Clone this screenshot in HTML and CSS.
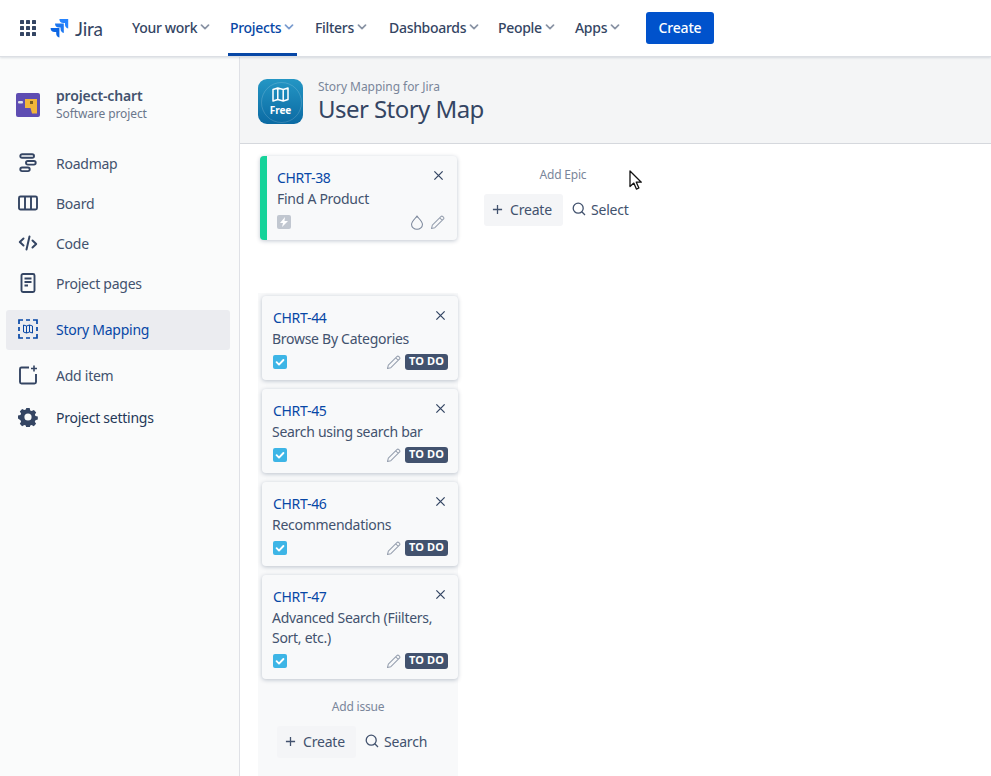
FILE: index.html
```html
<!DOCTYPE html>
<html lang="en">
<head>
    <meta charset="UTF-8">
    <meta name="viewport" content="width=device-width, initial-scale=1.0">
    <title>User Story Map</title>
    <link rel="stylesheet" href="styles.css">
</head>
<body>
    <svg class="sprites" width="0" height="0">
        <symbol id="chev" viewBox="0 0 10 6"><path d="M1.5 1.2 5 4.6l3.5-3.4" fill="none" stroke="currentColor" stroke-width="1.7" stroke-linecap="round" stroke-linejoin="round"/></symbol>
        <symbol id="close" viewBox="0 0 12 12"><path d="M1.5 1.5l9 9M10.5 1.5l-9 9" fill="none" stroke="currentColor" stroke-width="1.4"/></symbol>
        <symbol id="pencil" viewBox="0 0 16 16"><path d="M1.6 14.4l.9-3.6L11.6 1.7a1.5 1.5 0 0 1 2.1 0l.6.6a1.5 1.5 0 0 1 0 2.1L5.2 13.500z M10.400 3l2.600 2.600" fill="none" stroke="currentColor" stroke-width="1.100" stroke-linejoin="round"/></symbol>
        <symbol id="plus" viewBox="0 0 12 12"><path d="M6 1v10M1 6h10" fill="none" stroke="currentColor" stroke-width="1.4"/></symbol>
        <symbol id="search" viewBox="0 0 14 14"><circle cx="6.2" cy="6.2" r="5" fill="none" stroke="currentColor" stroke-width="1.3"/><path d="M9.8 9.8l3.2 3.2" fill="none" stroke="currentColor" stroke-width="1.3"/></symbol>
        <symbol id="check" viewBox="0 0 14 14"><rect width="14" height="14" rx="2" fill="#3db5e6"/><path d="M3.6 7.2l2.4 2.4 4.4-4.6" fill="none" stroke="#fff" stroke-width="1.9" stroke-linecap="round" stroke-linejoin="round"/></symbol>
    </svg>

    <header class="topbar">
        <svg class="apps-icon" width="16" height="16" viewBox="0 0 16 16" fill="#344563">
            <rect x="0" y="0" width="4" height="4" rx=".6"/><rect x="6" y="0" width="4" height="4" rx=".6"/><rect x="12" y="0" width="4" height="4" rx=".6"/>
            <rect x="0" y="6" width="4" height="4" rx=".6"/><rect x="6" y="6" width="4" height="4" rx=".6"/><rect x="12" y="6" width="4" height="4" rx=".6"/>
            <rect x="0" y="12" width="4" height="4" rx=".6"/><rect x="6" y="12" width="4" height="4" rx=".6"/><rect x="12" y="12" width="4" height="4" rx=".6"/>
        </svg>
        <div class="brand">
            <svg width="19" height="19" viewBox="0 0 19 19">
                <path d="M18.2 0H9.4a4 4 0 0 0 4 4h1.6v1.600a4 4 0 0 0 3.200 3.900z" fill="#2684ff"/>
                <path d="M13.800 4.500H5a4 4 0 0 0 4 4h1.600v1.600a4 4 0 0 0 3.200 3.900z" fill="#1f78f0"/>
                <path d="M9.400 9H.6a4 4 0 0 0 4 4h1.600v1.600a4 4 0 0 0 3.200 3.900z" fill="#0c66e4"/>
            </svg>
            <span class="brand-name">Jira</span>
        </div>
        <nav class="menu">
            <a class="menu-item w-work">Your work <svg class="chev"><use href="#chev"/></svg></a>
            <a class="menu-item w-projects active">Projects <svg class="chev"><use href="#chev"/></svg></a>
            <a class="menu-item w-filters">Filters <svg class="chev"><use href="#chev"/></svg></a>
            <a class="menu-item w-dash">Dashboards <svg class="chev"><use href="#chev"/></svg></a>
            <a class="menu-item w-people">People <svg class="chev"><use href="#chev"/></svg></a>
            <a class="menu-item w-apps">Apps <svg class="chev"><use href="#chev"/></svg></a>
        </nav>
        <button class="create-btn">Create</button>
    </header>

    <div class="layout">
        <aside class="sidebar">
            <div class="project">
                <svg class="project-icon" width="24" height="24" viewBox="0 0 24 24">
                    <rect width="24" height="24" rx="2" fill="#5e4db2"/>
                    <rect x="2" y="8" width="5" height="2.500" rx="1" fill="#dfe1e6"/>
                    <path d="M9 6h12v14.500h-5l-1.500-5.500H9z" fill="#f2b53a"/>
                    <rect x="14" y="8" width="3" height="3" fill="#7a5c1e"/>
                </svg>
                <div>
                    <div class="project-name">project-chart</div>
                    <div class="project-type">Software project</div>
                </div>
            </div>
            <ul class="side-nav">
                <li class="side-item">
                    <svg class="side-icon" viewBox="0 0 20 20" fill="none" stroke="#344563" stroke-width="1.900"><rect x="2.300" y="1.200" width="13.700" height="3.600" rx="1.800"/><rect x="8" y="8" width="9.700" height="3.600" rx="1.800"/><rect x="2.300" y="14.500" width="9.400" height="3.600" rx="1.800"/></svg>
                    Roadmap
                </li>
                <li class="side-item">
                    <svg class="side-icon" viewBox="0 0 20 20" fill="none" stroke="#344563" stroke-width="1.900"><rect x="1" y="3.500" width="18" height="13" rx="1.500"/><path d="M7 3.500v13M13 3.500v13"/></svg>
                    Board
                </li>
                <li class="side-item">
                    <svg class="side-icon" viewBox="0 0 20 20" fill="none" stroke="#344563" stroke-width="2" stroke-linecap="round" stroke-linejoin="round"><path d="M5.500 5.500 1.800 9l3.700 3.500M14.500 7.500l3.700 3.500-3.700 3.500M11.500 3.500 8.500 16.500"/></svg>
                    Code
                </li>
                <li class="side-item">
                    <svg class="side-icon" viewBox="0 0 20 20" fill="none" stroke="#344563" stroke-width="1.900"><rect x="3.500" y="1" width="13" height="18" rx="1.500"/><path d="M6.500 5.500h7M6.500 9h7M6.500 12.500h3.500"/></svg>
                    Project pages
                </li>
                <li class="side-item selected">
                    <svg class="side-icon" viewBox="0 0 20 20" fill="none" stroke="#0747a6" stroke-width="1.700"><path d="M1 5V1h4M8 1h4M15 1h4v4M19 8v4M19 15v4h-4M12 19H8M5 19H1v-4M1 12V8"/><path d="M5.500 6l3 1 3-1 3 1v7l-3-1-3 1-3-1zM8.500 7v7M11.500 6v7" stroke-width="1"/></svg>
                    Story Mapping
                </li>
                <li class="side-item r-add">
                    <svg class="side-icon" viewBox="0 0 20 20" fill="none" stroke="#344563" stroke-width="1.900"><path d="M11 2.500H3.500a1.500 1.500 0 0 0-1.500 1.500v13a1.500 1.500 0 0 0 1.500 1.500h13a1.500 1.500 0 0 0 1.500-1.500V9"/><path d="M16 .5v6M13 3.500h6" stroke-width="1.600"/></svg>
                    Add item
                </li>
                <li class="side-item dark r-settings">
                    <svg class="side-icon" viewBox="0 0 20 20"><path fill-rule="evenodd" fill="#344563" d="M8.300 1h3.400l.5 2.400 1.500.7 2.200-1.200 2.300 2.500-1.300 2.100.5 1.500 2.400.6v3l-2.400.6-.6 1.500 1.300 2.100-2.300 2.400-2.200-1.200-1.400.6-.5 2.400H8.300l-.5-2.400-1.500-.6-2.200 1.200-2.300-2.400 1.300-2.100-.6-1.500L0 11.600v-3l2.500-.6.600-1.500-1.300-2.100 2.300-2.500 2.200 1.200 1.500-.7zM10 6.400a3.600 3.600 0 1 0 0 7.200 3.600 3.600 0 0 0 0-7.200z"/></svg>
                    Project settings
                </li>
            </ul>
        </aside>

        <main class="content">
            <div class="page-head">
                <div class="app-logo">
                    <svg width="17" height="15" viewBox="0 0 17 15" fill="none" stroke="#fff" stroke-width="1.500" stroke-linejoin="round"><path d="M1 2.500 5.800 1l5.400 1.500L16 1v11.500L11.200 14l-5.400-1.500L1 14zM5.800 1v11.500M11.200 2.500V14"/></svg>
                    <span class="app-free">Free</span>
                </div>
                <div class="app-text">
                    <div class="app-name">Story Mapping for Jira</div>
                    <h1 class="page-title">User Story Map</h1>
                </div>
            </div>

            <div class="board">
                <div class="column">
                    <div class="epic-card">
                        <div class="card-top">
                            <a class="issue-key">CHRT-38</a>
                            <svg class="close-icon"><use href="#close"/></svg>
                        </div>
                        <div class="card-title">Find A Product</div>
                        <div class="card-foot">
                            <span class="epic-badge">
                                <svg width="8" height="10" viewBox="0 0 8 10"><path d="M5 0 0 6h3l-1 4 6-6H4.500z" fill="#fff"/></svg>
                            </span>
                            <span class="spacer"></span>
                            <svg class="drop-icon" viewBox="0 0 14 16"><path d="M7 1.200C5 4 1.200 6.800 1.200 10a5.800 5.200 0 0 0 11.600 0C12.800 6.800 9 4 7 1.200z" fill="none" stroke="currentColor" stroke-width="1.100"/></svg>
                            <svg class="pencil-icon"><use href="#pencil"/></svg>
                        </div>
                    </div>

                    <div class="issue-list">
                        <div class="issue-card">
                            <div class="card-top">
                                <a class="issue-key">CHRT-44</a>
                                <svg class="close-icon"><use href="#close"/></svg>
                            </div>
                            <div class="card-title">Browse By Categories</div>
                            <div class="card-foot">
                                <svg class="check-icon"><use href="#check"/></svg>
                                <span class="spacer"></span>
                                <svg class="pencil-icon"><use href="#pencil"/></svg>
                                <span class="status">TO DO</span>
                            </div>
                        </div>
                        <div class="issue-card">
                            <div class="card-top">
                                <a class="issue-key">CHRT-45</a>
                                <svg class="close-icon"><use href="#close"/></svg>
                            </div>
                            <div class="card-title">Search using search bar</div>
                            <div class="card-foot">
                                <svg class="check-icon"><use href="#check"/></svg>
                                <span class="spacer"></span>
                                <svg class="pencil-icon"><use href="#pencil"/></svg>
                                <span class="status">TO DO</span>
                            </div>
                        </div>
                        <div class="issue-card">
                            <div class="card-top">
                                <a class="issue-key">CHRT-46</a>
                                <svg class="close-icon"><use href="#close"/></svg>
                            </div>
                            <div class="card-title">Recommendations</div>
                            <div class="card-foot">
                                <svg class="check-icon"><use href="#check"/></svg>
                                <span class="spacer"></span>
                                <svg class="pencil-icon"><use href="#pencil"/></svg>
                                <span class="status">TO DO</span>
                            </div>
                        </div>
                        <div class="issue-card">
                            <div class="card-top">
                                <a class="issue-key">CHRT-47</a>
                                <svg class="close-icon"><use href="#close"/></svg>
                            </div>
                            <div class="card-title">Advanced Search (Fiilters, Sort, etc.)</div>
                            <div class="card-foot">
                                <svg class="check-icon"><use href="#check"/></svg>
                                <span class="spacer"></span>
                                <svg class="pencil-icon"><use href="#pencil"/></svg>
                                <span class="status">TO DO</span>
                            </div>
                        </div>
                        <div class="add-box add-issue">
                            <div class="add-label">Add issue</div>
                            <div class="add-actions">
                                <button class="add-create"><svg class="plus-icon"><use href="#plus"/></svg>Create</button>
                                <button class="add-other"><svg class="search-icon"><use href="#search"/></svg>Search</button>
                            </div>
                        </div>
                    </div>
                </div>

                <div class="add-box add-epic">
                    <div class="add-label">Add Epic</div>
                    <div class="add-actions">
                        <button class="add-create"><svg class="plus-icon"><use href="#plus"/></svg>Create</button>
                        <button class="add-other"><svg class="search-icon"><use href="#search"/></svg>Select</button>
                    </div>
                </div>
            </div>
        </main>
    </div>

    <svg class="cursor" width="14" height="21" viewBox="0 0 14 21"><path d="M1 1v15.500l3.800-3.400 2.600 6 2.500-1.100-2.600-5.800h5z" fill="#fff" stroke="#111" stroke-width="1.300" stroke-linejoin="round"/></svg>
</body>
</html>
```

FILE: styles.css
```css
* {
    box-sizing: border-box;
}
html, body {
    height: 100%;
}
body {
    margin: 0;
    height: 776px;
    overflow: hidden;
    font-family: "Noto Sans", "Open Sans", sans-serif;
    font-size: 14px;
    color: #42526e;
    background-color: #fff;
}
.sprites {
    position: absolute;
}
button {
    font-family: inherit;
    border: 0;
    background: none;
    cursor: pointer;
}

/* top bar */
.topbar {
    display: flex;
    align-items: center;
    height: 57px;
    padding-left: 20px;
    background-color: #fff;
    border-bottom: 1px solid #dcdfe4;
    box-shadow: 0 1px 2px rgba(9, 30, 66, 0.12);
    position: relative;
}
.brand {
    display: flex;
    align-items: center;
    gap: 6px;
    width: 82px;
    margin-left: 14px;
}
.brand-name {
    font-size: 19px;
    font-family: "Lato", sans-serif;
    font-weight: 400;
    color: #344563;
    line-height: 1;
    letter-spacing: -0.2px;
}
.menu {
    display: flex;
    height: 56px;
}
.menu-item {
    display: flex;
    align-items: center;
    gap: 3px;
    height: 56px;
    padding-top: 1px;
    font-weight: 500;
    font-size: 14px;
    letter-spacing: -0.3px;
    color: #344563;
    border-bottom: 3px solid transparent;
    white-space: nowrap;
}
.menu-item .chev {
    width: 10px;
    height: 6px;
    flex-shrink: 0;
    color: #8993a4;
}
.w-work { width: 96px; }
.w-projects { width: 69px; padding-left: 2px; margin-right: 18px; }
.w-filters { width: 58px; margin-right: 16px; }
.w-dash { width: 93px; margin-right: 16px; }
.w-people { width: 61px; margin-right: 16px; }
.w-apps { width: 45px; }
.menu-item.active {
    color: #0747a6;
    border-bottom-color: #0747a6;
}
.menu-item.active .chev {
    color: #7a9ccf;
}
.create-btn {
    width: 68px;
    height: 32px;
    margin-left: 26px;
    padding-bottom: 2px;
    border-radius: 3px;
    background-color: #0052cc;
    color: #fff;
    font-size: 14px;
    font-weight: 500;
    letter-spacing: -0.2px;
}

/* sidebar */
.layout {
    display: flex;
    height: 719px;
}
.sidebar {
    width: 240px;
    flex-shrink: 0;
    padding: 24px 0 0 6px;
    background-color: #fafbfb;
    border-right: 1px solid #dfe1e6;
}
.project {
    display: flex;
    align-items: center;
    gap: 16px;
    padding-left: 10px;
    height: 46px;
}
.project-icon {
    margin-top: 2px;
}
.project-name {
    font-size: 14px;
    font-weight: 600;
    color: #42526e;
    line-height: 18px;
    letter-spacing: -0.15px;
}
.project-type {
    font-size: 12px;
    color: #6b778c;
    line-height: 17px;
    letter-spacing: -0.1px;
}
.side-nav {
    list-style: none;
    margin: 16px 0 0;
    padding: 0;
    width: 224px;
}
.side-item {
    display: flex;
    align-items: center;
    gap: 18px;
    height: 40px;
    padding-left: 12px;
    font-size: 14px;
    letter-spacing: -0.25px;
    color: #42526e;
}
.side-icon {
    width: 20px;
    height: 20px;
    flex-shrink: 0;
}
.side-item.selected {
    margin-top: 7px;
    padding-bottom: 2px;
    background-color: #ebecf0;
    border-radius: 3px;
    color: #0747a6;
}
.r-add {
    margin-top: 5px;
}
.r-settings {
    margin-top: 2px;
}
.side-item.dark {
    color: #253858;
}

/* page head */
.content {
    flex: 1;
    min-width: 0;
}
.page-head {
    display: flex;
    align-items: center;
    gap: 15px;
    height: 87px;
    padding: 2px 0 0 18px;
    background-color: #f4f5f6;
    border-bottom: 1px solid #d5d8dd;
}
.app-logo {
    display: flex;
    flex-direction: column;
    align-items: center;
    justify-content: center;
    gap: 1px;
    position: relative;
    width: 45px;
    height: 45px;
    border-radius: 9px;
    background: linear-gradient(180deg, #2496c4, #0b6aa3);
}
.app-logo::before {
    content: "";
    position: absolute;
    left: 3px;
    top: 3px;
    width: 39px;
    height: 39px;
    border-radius: 50%;
    border: 1px solid rgba(255, 255, 255, 0.16);
}
.app-free {
    font-size: 10px;
    font-weight: 700;
    line-height: 11px;
    color: #fff;
    margin-top: 2px;
}
.app-name {
    font-size: 12px;
    line-height: 16px;
    color: #7a869a;
    letter-spacing: -0.05px;
}
.page-title {
    margin: 0;
    font-size: 24px;
    font-weight: 400;
    line-height: 28px;
    color: #344563;
    letter-spacing: -0.55px;
}

/* board */
.board {
    display: flex;
    align-items: flex-start;
    padding: 12px 0 0 18px;
}
.column {
    width: 200px;
}
.epic-card {
    width: 197px;
    height: 84px;
    margin-left: 2px;
    padding: 12px 11px 0 10px;
    background-color: #f8f9fa;
    border-left: 7px solid #16d39a;
    border-radius: 4px;
    box-shadow: 0 1px 4px rgba(9, 30, 66, 0.25);
}
.epic-card .close-icon {
    margin-top: 2px;
}
.epic-card .card-foot {
    padding-right: 1px;
}
.issue-list {
    margin-top: 53px;
    padding: 3px 0 0 4px;
    height: 500px;
    background-color: #f8f9fa;
}
.issue-card {
    width: 196px;
    margin-bottom: 9px;
    padding: 12px 10px 8px 10px;
    background-color: #f8f9fa;
    border-radius: 4px;
    box-shadow: 0 1px 4px rgba(9, 30, 66, 0.25);
}
.card-top {
    display: flex;
    justify-content: space-between;
    align-items: flex-start;
    height: 20px;
}
.issue-card .card-top {
    padding-left: 1px;
}
.issue-key {
    font-size: 14px;
    line-height: 20px;
    color: #0747a6;
    letter-spacing: -0.3px;
}
.close-icon {
    width: 11px;
    height: 11px;
    margin: 2px 2px 0 0;
    color: #344563;
    flex-shrink: 0;
}
.card-title {
    font-size: 14px;
    line-height: 20px;
    margin-top: 1px;
    letter-spacing: -0.28px;
    color: #42526e;
}
.card-foot {
    display: flex;
    align-items: center;
    height: 20px;
    margin-top: 3px;
}
.issue-card .card-foot {
    padding-left: 1px;
}
.spacer {
    flex: 1;
}
.epic-badge {
    display: flex;
    align-items: center;
    justify-content: center;
    width: 14px;
    height: 14px;
    border-radius: 2px;
    background-color: #c1c7d0;
}
.drop-icon {
    width: 14px;
    height: 15px;
    margin-right: 6px;
    color: #7a869a;
}
.pencil-icon {
    width: 15px;
    height: 15px;
    color: #97a0af;
}
.issue-card .pencil-icon {
    margin-right: 4px;
}
.check-icon {
    width: 14px;
    height: 14px;
}
.status {
    height: 16px;
    width: 43px;
    text-align: center;
    font-size: 11px;
    font-weight: 700;
    line-height: 14px;
    border-radius: 3px;
    background-color: #42526e;
    color: #fff;
    letter-spacing: 0.1px;
}

/* add boxes */
.add-box {
    text-align: center;
}
.add-issue {
    margin-top: 19px;
    width: 192px;
}
.add-epic {
    margin-left: 26px;
    margin-top: 10px;
    width: 158px;
}
.add-label {
    font-size: 12px;
    line-height: 18px;
    color: #7a869a;
    letter-spacing: -0.2px;
}
.add-actions {
    display: flex;
    margin-top: 10px;
}
.add-issue .add-actions {
    padding-left: 15px;
}
.add-create, .add-other {
    display: flex;
    align-items: center;
    gap: 7px;
    height: 32px;
    padding: 0 8px 2px;
    font-size: 14px;
    letter-spacing: -0.2px;
    color: #42526e;
    border-radius: 3px;
}
.add-create {
    width: 79px;
    background-color: #f4f5f7;
}
.add-other {
    gap: 5px;
    padding-left: 9px;
}
.plus-icon {
    width: 11px;
    height: 11px;
    color: #42526e;
}
.search-icon {
    width: 14px;
    height: 14px;
    color: #42526e;
}

/* mouse pointer in the capture */
.cursor {
    position: absolute;
    left: 629px;
    top: 170px;
}
```
